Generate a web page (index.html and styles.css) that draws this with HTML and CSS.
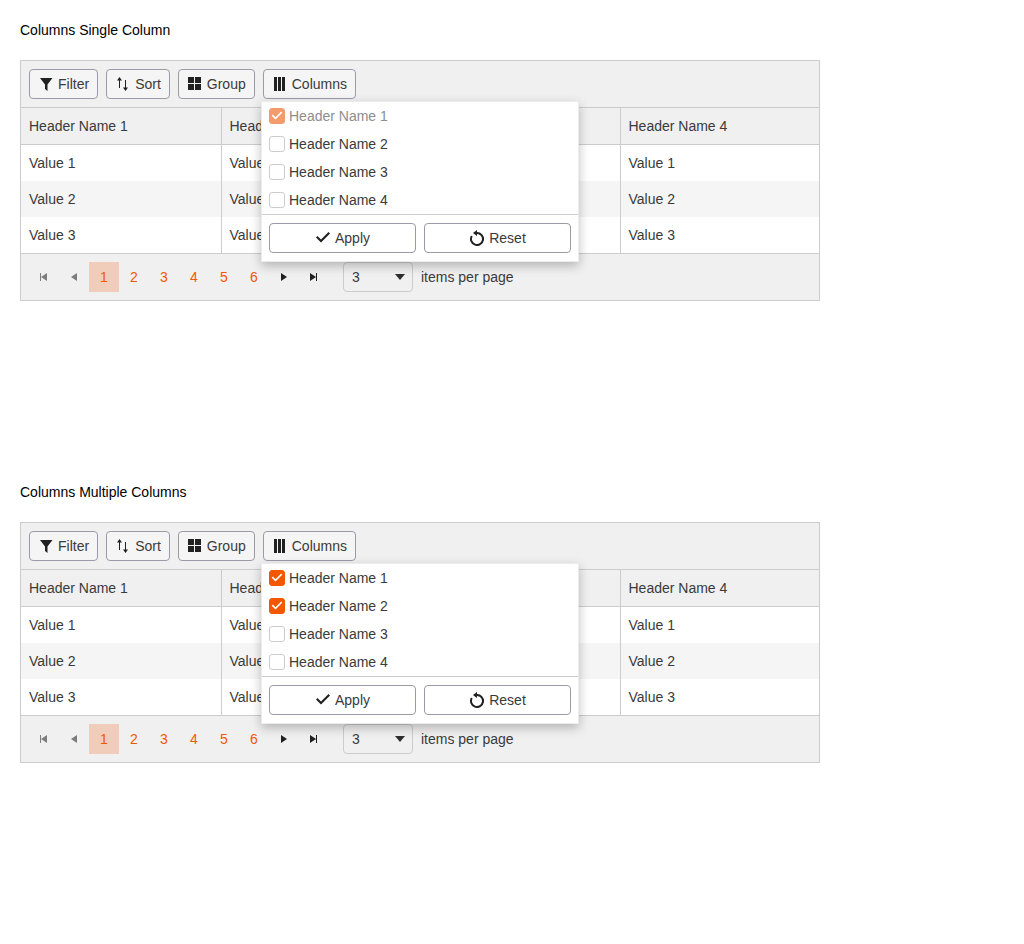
FILE: index.html
```html
<!DOCTYPE html>
<html lang="en">
<head>
    <meta charset="UTF-8" />
    <title>Grid Columns</title>
    <link rel="stylesheet" href="styles.css">
</head>
<body>
    <svg class="defs" width="0" height="0">
        <symbol id="i-filter" viewBox="0 0 16 16"><path d="M2 2h12.500L9.500 8.500V15L7 13V8.500z"/></symbol>
        <symbol id="i-sort" viewBox="0 0 16 16"><path d="M4.500 1L7 4.500H5V12H4V4.500H2zM10 4h1v7.500h2L10.500 15 8 11.500h2z"/></symbol>
        <symbol id="i-group" viewBox="0 0 16 16"><path d="M1 1h6v6H1zM8 1h6v6H8zM1 8h6v6H1zM8 8h6v6H8z"/></symbol>
        <symbol id="i-cols" viewBox="0 0 16 16"><path d="M2 1h3v14H2zM6 1h3v14H6zM10 1h3v14h-3z"/></symbol>
        <symbol id="i-check" viewBox="0 0 16 16"><path d="M1 7.500L2.500 6 6 9.500 13.500 2 15 3.500 6 12.500z"/></symbol>
        <symbol id="i-reset" viewBox="0 0 16 16"><path d="M8 2A7 7 0 1 1 1.900 5.600L3.600 6.600A5 5 0 1 0 8 4zM8 0V6L4 3z"/></symbol>
        <symbol id="i-first" viewBox="0 0 16 16"><path d="M4 4h1v8H4zM11 4v8L5 8z"/></symbol>
        <symbol id="i-prev" viewBox="0 0 16 16"><path d="M11 4v8L5 8z"/></symbol>
        <symbol id="i-next" viewBox="0 0 16 16"><path d="M5 4v8l6-4z"/></symbol>
        <symbol id="i-last" viewBox="0 0 16 16"><path d="M4 4v8l6-4zM10 4h1v8h-1z"/></symbol>
    </svg>

    <section class="demo">
        <h2 class="demo-title">Columns Single Column</h2>
        <div class="grid">
            <div class="toolbar">
                <button class="btn"><svg class="icon"><use href="#i-filter"/></svg>Filter</button>
                <button class="btn"><svg class="icon"><use href="#i-sort"/></svg>Sort</button>
                <button class="btn"><svg class="icon"><use href="#i-group"/></svg>Group</button>
                <button class="btn"><svg class="icon"><use href="#i-cols"/></svg>Columns</button>
            </div>
            <table class="table">
                <thead>
                    <tr><th>Header Name 1</th><th>Header Name 2</th><th>Header Name 3</th><th>Header Name 4</th></tr>
                </thead>
                <tbody>
                    <tr><td>Value 1</td><td>Value 1</td><td>Value 1</td><td>Value 1</td></tr>
                    <tr class="alt"><td>Value 2</td><td>Value 2</td><td>Value 2</td><td>Value 2</td></tr>
                    <tr><td>Value 3</td><td>Value 3</td><td>Value 3</td><td>Value 3</td></tr>
                </tbody>
            </table>
            <div class="pager">
                <a class="page-arrow muted"><svg class="icon-sm"><use href="#i-first"/></svg></a>
                <a class="page-arrow muted"><svg class="icon-sm"><use href="#i-prev"/></svg></a>
                <a class="page-num selected">1</a>
                <a class="page-num">2</a>
                <a class="page-num">3</a>
                <a class="page-num">4</a>
                <a class="page-num">5</a>
                <a class="page-num">6</a>
                <a class="page-arrow"><svg class="icon-sm"><use href="#i-next"/></svg></a>
                <a class="page-arrow"><svg class="icon-sm"><use href="#i-last"/></svg></a>
                <div class="size-select"><span>3</span><i class="caret"></i></div>
                <span class="size-label">items per page</span>
            </div>
            <div class="popup">
                <div class="options">
                    <label class="option disabled"><span class="box checked"><svg class="tick"><use href="#i-check"/></svg></span>Header Name 1</label>
                    <label class="option"><span class="box"></span>Header Name 2</label>
                    <label class="option"><span class="box"></span>Header Name 3</label>
                    <label class="option"><span class="box"></span>Header Name 4</label>
                </div>
                <div class="actions">
                    <button class="btn wide"><svg class="icon"><use href="#i-check"/></svg>Apply</button>
                    <button class="btn wide"><svg class="icon"><use href="#i-reset"/></svg>Reset</button>
                </div>
            </div>
        </div>
    </section>

    <section class="demo">
        <h2 class="demo-title">Columns Multiple Columns</h2>
        <div class="grid">
            <div class="toolbar">
                <button class="btn"><svg class="icon"><use href="#i-filter"/></svg>Filter</button>
                <button class="btn"><svg class="icon"><use href="#i-sort"/></svg>Sort</button>
                <button class="btn"><svg class="icon"><use href="#i-group"/></svg>Group</button>
                <button class="btn"><svg class="icon"><use href="#i-cols"/></svg>Columns</button>
            </div>
            <table class="table">
                <thead>
                    <tr><th>Header Name 1</th><th>Header Name 2</th><th>Header Name 3</th><th>Header Name 4</th></tr>
                </thead>
                <tbody>
                    <tr><td>Value 1</td><td>Value 1</td><td>Value 1</td><td>Value 1</td></tr>
                    <tr class="alt"><td>Value 2</td><td>Value 2</td><td>Value 2</td><td>Value 2</td></tr>
                    <tr><td>Value 3</td><td>Value 3</td><td>Value 3</td><td>Value 3</td></tr>
                </tbody>
            </table>
            <div class="pager">
                <a class="page-arrow muted"><svg class="icon-sm"><use href="#i-first"/></svg></a>
                <a class="page-arrow muted"><svg class="icon-sm"><use href="#i-prev"/></svg></a>
                <a class="page-num selected">1</a>
                <a class="page-num">2</a>
                <a class="page-num">3</a>
                <a class="page-num">4</a>
                <a class="page-num">5</a>
                <a class="page-num">6</a>
                <a class="page-arrow"><svg class="icon-sm"><use href="#i-next"/></svg></a>
                <a class="page-arrow"><svg class="icon-sm"><use href="#i-last"/></svg></a>
                <div class="size-select"><span>3</span><i class="caret"></i></div>
                <span class="size-label">items per page</span>
            </div>
            <div class="popup">
                <div class="options">
                    <label class="option"><span class="box checked"><svg class="tick"><use href="#i-check"/></svg></span>Header Name 1</label>
                    <label class="option"><span class="box checked"><svg class="tick"><use href="#i-check"/></svg></span>Header Name 2</label>
                    <label class="option"><span class="box"></span>Header Name 3</label>
                    <label class="option"><span class="box"></span>Header Name 4</label>
                </div>
                <div class="actions">
                    <button class="btn wide"><svg class="icon"><use href="#i-check"/></svg>Apply</button>
                    <button class="btn wide"><svg class="icon"><use href="#i-reset"/></svg>Reset</button>
                </div>
            </div>
        </div>
    </section>
</body>
</html>
```

FILE: styles.css
```css
body {
    margin: 0;
    padding: 20px;
    font-family: "Liberation Sans", Arial, sans-serif;
    font-size: 14px;
    color: #3a3a3a;
    background-color: #fff;
}

.defs {
    position: absolute;
}

.demo {
    width: 800px;
    height: 462px;
}

.demo-title {
    margin: 0 0 20px;
    font-size: 14px;
    font-weight: normal;
    line-height: 20px;
    color: #000;
}

.grid {
    position: relative;
    border: 1px solid #ccc;
    background-color: #f0f0f0;
}

.toolbar {
    display: flex;
    gap: 8px;
    padding: 8px;
    border-bottom: 1px solid #ccc;
}

.btn {
    display: flex;
    align-items: center;
    justify-content: center;
    gap: 4px;
    height: 30px;
    padding: 0 8px;
    font-family: inherit;
    font-size: 14px;
    color: #3a3a3a;
    background-color: #f5f5f5;
    border: 1px solid #9c9aa8;
    border-radius: 4px;
}

.icon {
    width: 16px;
    height: 16px;
    fill: #212121;
}

.table {
    width: 100%;
    border-collapse: separate;
    border-spacing: 0;
    table-layout: fixed;
}

.table th {
    box-sizing: border-box;
    height: 37px;
    padding: 0 8px;
    font-weight: normal;
    text-align: left;
    border-bottom: 1px solid #ccc;
}

.table td {
    box-sizing: border-box;
    height: 36px;
    padding: 0 8px;
    background-color: #fff;
}

.table th + th,
.table td + td {
    border-left: 1px solid #ccc;
}

.table .alt td {
    background-color: #f5f5f5;
}

.pager {
    display: flex;
    align-items: center;
    padding: 8px;
    border-top: 1px solid #ccc;
}

.page-arrow,
.page-num {
    display: flex;
    align-items: center;
    justify-content: center;
    width: 30px;
    height: 30px;
}

.page-num {
    color: #f35800;
}

.page-num.selected {
    background-color: #f0cdbb;
}

.icon-sm {
    width: 16px;
    height: 16px;
    fill: #212121;
}

.muted .icon-sm {
    fill: #7d7d7d;
}

.size-select {
    display: flex;
    align-items: center;
    justify-content: space-between;
    box-sizing: border-box;
    width: 70px;
    height: 30px;
    margin-left: 14px;
    padding: 0 7px 0 8px;
    border: 1px solid #ccc;
    border-radius: 4px;
}

.caret {
    border-top: 6px solid #2e2e2e;
    border-left: 5px solid transparent;
    border-right: 5px solid transparent;
}

.size-label {
    margin-left: 8px;
}

.popup {
    position: absolute;
    top: 40px;
    left: 240px;
    width: 316px;
    border: 1px solid #ececec;
    background-color: #fff;
    box-shadow: 0 4px 10px rgba(0, 0, 0, 0.25);
}

.option {
    display: flex;
    align-items: center;
    gap: 4px;
    height: 28px;
    padding: 0 7px;
}

.option.disabled {
    color: #8e8e8e;
}

.box {
    display: flex;
    align-items: center;
    justify-content: center;
    box-sizing: border-box;
    width: 16px;
    height: 16px;
    border: 1px solid #ccc;
    border-radius: 3px;
}

.box.checked {
    background-color: #f35800;
    border-color: #f35800;
}

.disabled .box.checked {
    background-color: #f39b6b;
    border-color: #f39b6b;
}

.tick {
    width: 12px;
    height: 12px;
    fill: #fff;
}

.actions {
    display: flex;
    gap: 8px;
    padding: 8px 7px;
    border-top: 1px solid #ccc;
}

.btn.wide {
    flex: 1;
    background-color: #fff;
}
```
